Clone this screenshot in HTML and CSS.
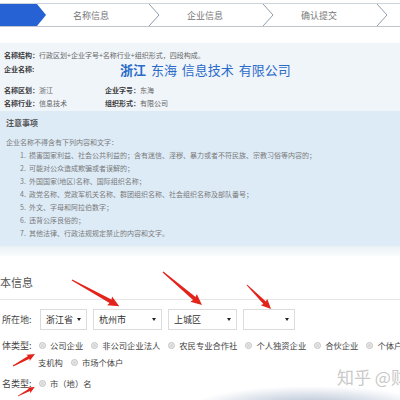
FILE: index.html
```html
<!DOCTYPE html>
<html lang="zh-CN">

<head>
    <meta charset="UTF-8">
    <meta name="viewport" content="width=device-width, initial-scale=1.0">
    <title>名称信息</title>
    <link rel="stylesheet" href="styles.css">
</head>

<body>
    <div class="steps">
        <svg class="step-now" width="46" height="22" viewBox="0 0 46 22"><polygon points="0,0 37,0 46,11 37,22 0,22" fill="#2762d4"/></svg>
        <div class="step">名称信息</div>
        <svg class="chev" width="12" height="22" viewBox="0 0 12 22"><polyline points="1,0 11,11 1,22"/></svg>
        <div class="step">企业信息</div>
        <svg class="chev" width="12" height="22" viewBox="0 0 12 22"><polyline points="1,0 11,11 1,22"/></svg>
        <div class="step">确认提交</div>
        <svg class="chev" width="12" height="22" viewBox="0 0 12 22"><polyline points="1,0 11,11 1,22"/></svg>
    </div>

    <div class="summary">
        <p class="line"><b>名称结构：</b>行政区划+企业字号+名称行业+组织形式，四段构成。</p>
        <div class="name-row">
            <b>企业名称:</b>
            <span class="full-name"><strong>浙江</strong> 东海 信息技术 有限公司</span>
        </div>
        <div class="parts">
            <p><b>名称区划：</b>浙江</p>
            <p><b>企业字号：</b>东海</p>
            <p><b>名称行业：</b>信息技术</p>
            <p><b>组织形式：</b>有限公司</p>
        </div>
    </div>

    <div class="notice">
        <h3>注意事项</h3>
        <p class="lead">企业名称不得含有下列内容和文字：</p>
        <ul>
            <li>1.&nbsp; 损害国家利益、社会公共利益的；含有迷信、淫秽、暴力或者不符民族、宗教习俗等内容的；</li>
            <li>2.&nbsp; 可能对公众造成欺骗或者误解的；</li>
            <li>3.&nbsp; 外国国家(地区)名称、国际组织名称；</li>
            <li>4.&nbsp; 政党名称、党政军机关名称、群团组织名称、社会组织名称及部队番号；</li>
            <li>5.&nbsp; 外文、字母和阿拉伯数字；</li>
            <li>6.&nbsp; 违背公序良俗的；</li>
            <li>7.&nbsp; 其他法律、行政法规规定禁止的内容和文字。</li>
        </ul>
    </div>
    <div class="fade"></div>

    <h2 class="section-title">本信息</h2>

    <div class="form-row">
        <span class="label">所在地:</span>
        <div class="select s1">浙江省</div>
        <div class="select s2">杭州市</div>
        <div class="select s2">上城区</div>
        <div class="select s3"></div>
    </div>

    <div class="radio-row first">
        <span class="label">体类型:</span>
        <div class="radios">
            <span class="radio"><i></i>公司企业</span>
            <span class="radio"><i></i>非公司企业法人</span>
            <span class="radio"><i></i>农民专业合作社</span>
            <span class="radio"><i></i>个人独资企业</span>
            <span class="radio"><i></i>合伙企业</span>
            <span class="radio"><i></i>个体户</span>
        </div>
    </div>
    <div class="radio-row">
        <span class="label"></span>
        <div class="radios">
            <span class="radio">支机构</span>
            <span class="radio"><i></i>市场个体户</span>
        </div>
    </div>
    <div class="radio-row last">
        <span class="label">名类型:</span>
        <div class="radios">
            <span class="radio"><i></i>市（地）名</span>
        </div>
    </div>

    <div class="watermark">知乎 @财</div>

    <svg class="arrows" width="400" height="400" viewBox="0 0 400 400">
        <g fill="#e2241b">
            <polygon transform="translate(72 280) rotate(28.95)" points="0,-0.6 44,-2 43,-5 54,0 43,5 44,2 0,0.6"/>
            <polygon transform="translate(163 272) rotate(40.2)" points="0,-0.6 41,-2 40,-5 51,0 40,5 41,2 0,0.6"/>
            <polygon transform="translate(247 285) rotate(45)" points="0,-0.5 25,-1.8 24,-4.5 34,0 24,4.5 25,1.8 0,0.5"/>
            <polygon transform="translate(13 366) rotate(-28.6)" points="0,-0.5 18,-1.5 17,-3.6 25,0 17,3.6 18,1.5 0,0.5"/>
            <polygon transform="translate(18 396) rotate(-27.9)" points="0,-0.4 13,-1.3 12,-3.2 19,0 12,3.2 13,1.3 0,0.4"/>
        </g>
    </svg>
</body>

</html>
```

FILE: styles.css
```css
body {
    font-family: "Noto Sans CJK SC", "Liberation Sans", sans-serif;
    margin: 0;
    padding: 0;
    width: 400px;
    height: 400px;
    overflow: hidden;
    position: relative;
    color: #666;
    background: #fff radial-gradient(ellipse 120px 22px at 310px 408px, rgba(150, 168, 194, 0.85), rgba(255, 255, 255, 0));
}

p, h2, h3, ul {
    margin: 0;
    padding: 0;
}

/* step bar */
.steps {
    display: flex;
    margin-top: 3px;
    height: 22px;
    border-top: 1px solid #cfd4da;
    border-bottom: 1px solid #bfc5cc;
}

.step-now {
    flex: none;
}

.step {
    flex: none;
    width: 102px;
    padding-right: 12px;
    box-sizing: border-box;
    display: flex;
    align-items: center;
    justify-content: center;
    font-size: 9px;
    color: #777;
}

.chev {
    flex: none;
}

.chev polyline {
    fill: none;
    stroke: #8d9db0;
    stroke-width: 1;
}

/* name summary */
.summary {
    margin-top: 16px;
    background-color: #f0f5fa;
    padding: 8px 0 3px 4px;
    font-size: 7px;
    line-height: 9px;
}

.summary b {
    color: #3a3a3a;
}

.name-row {
    display: flex;
    align-items: center;
    height: 18px;
}

.name-row b {
    width: 116px;
}

.full-name {
    font-size: 13px;
    color: #2b6bc8;
    white-space: pre;
    word-spacing: 2px;
}

.parts {
    display: grid;
    grid-template-columns: 101px auto;
    row-gap: 4px;
    margin-top: 8px;
}

/* notice */
.notice {
    background-color: #ddebf7;
    padding: 6px 0 6px 6px;
    font-size: 7px;
    color: #7a7a7a;
}

.notice h3 {
    font-size: 8px;
    line-height: 12px;
    color: #555;
}

.notice .lead {
    margin-top: 7px;
    line-height: 13px;
}

.notice ul {
    list-style: none;
    padding-left: 14px;
}

.notice li {
    line-height: 13px;
    white-space: nowrap;
}

.fade {
    height: 10px;
    background: linear-gradient(#eaf1f5, #fafcfd);
}

/* form */
.section-title {
    margin-top: 19px;
    padding-bottom: 10px;
    border-bottom: 1px solid #e6e6e6;
    font-size: 11px;
    line-height: 14px;
    font-weight: normal;
    color: #555;
}

.form-row {
    display: flex;
    align-items: center;
    gap: 6px;
    margin-top: 9px;
    font-size: 9px;
    color: #444;
}

.label {
    flex: none;
    width: 38px;
    padding-left: 2px;
    box-sizing: border-box;
    font-size: 9px;
    color: #444;
}

.form-row .label {
    width: 34px;
}

.select {
    position: relative;
    height: 21px;
    box-sizing: border-box;
    border: 1px solid #dcdcdc;
    padding-left: 5px;
    display: flex;
    align-items: center;
    color: #333;
}

.select::after {
    content: "";
    position: absolute;
    right: 5px;
    top: 8px;
    border-left: 2px solid transparent;
    border-right: 2px solid transparent;
    border-top: 3px solid #222;
}

.s1 {
    width: 47px;
}

.s2 {
    width: 69px;
}

.s3 {
    width: 52px;
}

.radio-row {
    display: flex;
    align-items: center;
    height: 12px;
    margin-top: 5px;
    white-space: nowrap;
}

.radio-row.first {
    margin-top: 9px;
}

.radio-row.last {
    margin-top: 9px;
}

.radios {
    display: flex;
    gap: 7px;
    font-size: 8.3px;
    color: #444;
}

.radio {
    display: flex;
    align-items: center;
}

.radio i {
    width: 7px;
    height: 7px;
    box-sizing: border-box;
    margin-left: 1px;
    margin-right: 4px;
    border-radius: 50%;
    border: 1px solid #c6c6c6;
    background-color: #d6d6d6;
    box-shadow: inset 0 0 0 1px #ececec;
}

/* overlays */
.watermark {
    position: absolute;
    left: 337px;
    top: 368px;
    font-size: 17px;
    line-height: 17px;
    color: #c9c9c9;
    white-space: nowrap;
}

.arrows {
    position: absolute;
    left: 0;
    top: 0;
    pointer-events: none;
}
```
